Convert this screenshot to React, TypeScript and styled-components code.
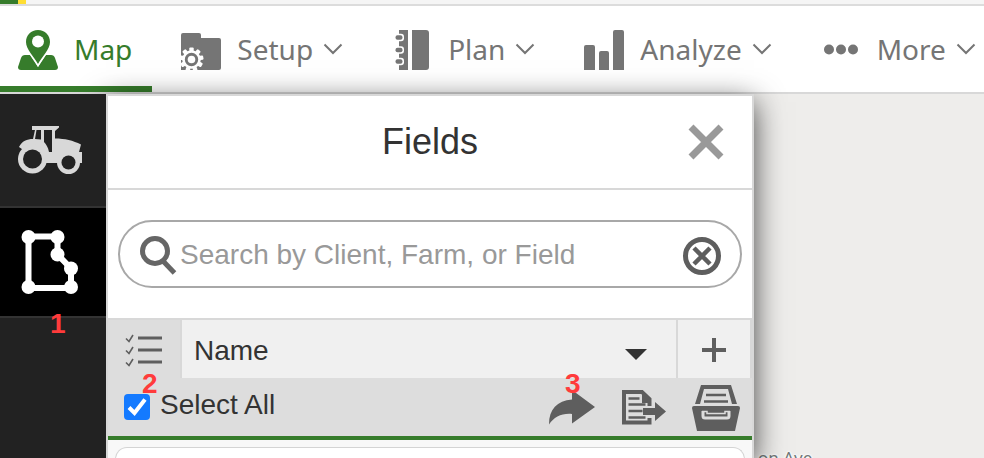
import React from "react";
import styled, { createGlobalStyle } from "styled-components";

const green = "#367c2b";
const navGrey = "#757575";
const line = "#d8d8d8";
const iconGrey = "#5e5e5e";

const GlobalStyle = createGlobalStyle`
  *, *::before, *::after { box-sizing: border-box; }
  body { margin: 0; font-family: "Liberation Sans", Arial, sans-serif; color: #333; }
  button, input, select { font: inherit; color: inherit; }
`;

const Page = styled.div`
  display: flex;
  flex-direction: column;
  height: 100vh;
  overflow: hidden;
  background: #eeedeb;
`;

const BrandStrip = styled.div`
  flex: none;
  height: 6px;
  border-bottom: 2px solid #dcdcdc;
  background: linear-gradient(to right, ${green} 18px, #ffde33 18px, #ffde33 26px, #f5f5f5 26px);
`;

const Nav = styled.nav`
  flex: none;
  display: flex;
  height: 88px;
  border-bottom: 2px solid ${line};
  background: #fff;
  overflow: hidden;
`;

const NavItem = styled.a<{ $active?: boolean }>`
  flex: none;
  display: flex;
  align-items: center;
  gap: 16px;
  padding: ${(p) => (p.$active ? "6px 20px 0 18px" : "6px 20px 6px 29px")};
  border-bottom: ${(p) => (p.$active ? `6px solid ${green}` : "none")};
  color: ${(p) => (p.$active ? green : navGrey)};
  font: 28px/40px "Noto Sans", sans-serif;
  text-decoration: none;
  white-space: nowrap;
`;

const NavIcon = styled.svg`
  flex: none;
  width: 40px;
  height: 42px;
  padding-top: 2px;
  fill: currentColor;
`;

const NavLabel = styled.span`
  display: flex;
  align-items: center;
  gap: 10px;
`;

const Chevron = () => (
  <svg width="20" height="12" viewBox="0 0 20 12" fill="none" stroke="currentColor" strokeWidth="2">
    <path d="M1.5 1.5 10 10 18.5 1.5" />
  </svg>
);

const Main = styled.main`
  isolation: isolate;
  flex: 1;
  min-height: 0;
  display: flex;
`;

const Sidebar = styled.aside`
  position: relative;
  z-index: 2;
  flex: none;
  width: 106px;
  background: #222;
`;

const SideButton = styled.button<{ $active?: boolean }>`
  display: flex;
  align-items: center;
  justify-content: center;
  width: 100%;
  height: ${(p) => (p.$active ? 110 : 114)}px;
  padding: 0 6px 0 0;
  border: 0;
  border-bottom: 2px solid #333;
  background: ${(p) => (p.$active ? "#000" : "#222")};
  color: ${(p) => (p.$active ? "#fff" : "#d8d8d8")};
`;

const Marker = styled.span<{ $left: number; $top: number }>`
  position: absolute;
  z-index: 2;
  left: ${(p) => p.$left}px;
  top: ${(p) => p.$top}px;
  color: #ff3b3b;
  font-size: 28px;
  line-height: 28px;
  font-weight: bold;
  pointer-events: none;
`;

const Panel = styled.section`
  position: relative;
  z-index: 1;
  flex: 0 1 648px;
  display: flex;
  flex-direction: column;
  border: 2px solid ${line};
  border-bottom: 0;
  background: #f8f8f8;
  box-shadow: 0 8px 28px rgba(0, 0, 0, 0.72);
`;

const PanelHeader = styled.header`
  flex: none;
  display: grid;
  grid-template-columns: 92px 1fr 92px;
  align-items: center;
  height: 94px;
  border-bottom: 2px solid ${line};
  background: #fff;
`;

const Title = styled.h1`
  grid-column: 2;
  margin: 0;
  font-size: 36px;
  line-height: 40px;
  font-weight: normal;
  text-align: center;
`;

const IconButton = styled.button`
  display: flex;
  align-items: center;
  justify-content: center;
  flex: none;
  padding: 0;
  border: 0;
  background: none;
  color: ${iconGrey};
`;

const CloseButton = styled(IconButton)`
  color: #999;
`;

const SearchArea = styled.div`
  flex: none;
  padding: 30px 10px;
  background: #fff;
`;

const SearchBox = styled.label`
  display: flex;
  align-items: center;
  height: 68px;
  padding: 2px 18px 0 20px;
  border: 2px solid #a8a8a8;
  border-radius: 34px;
`;

const SearchInput = styled.input`
  flex: 1;
  min-width: 0;
  padding: 0 0 0 2px;
  border: 0;
  outline: 0;
  background: none;
  font-size: 28px;
  line-height: 32px;
  &::placeholder { color: #999; opacity: 1; }
`;

const SortRow = styled.div`
  flex: none;
  display: flex;
  height: 60px;
  border-top: 2px solid ${line};
  border-right: 2px solid ${line};
  background: #f0f0f0;
`;

const ListButton = styled(IconButton)`
  width: 74px;
  padding-top: 2px;
  border-right: 2px solid ${line};
  background: #ddd;
`;

const AddButton = styled(IconButton)`
  width: 74px;
  padding-top: 2px;
  border-left: 2px solid ${line};
`;

const SortField = styled.label`
  flex: 1;
  display: grid;
  align-items: center;
  & > * { grid-area: 1 / 1; }
  & > svg { justify-self: end; margin: 12px 29px 0 0; pointer-events: none; }
`;

const SortSelect = styled.select`
  width: 100%;
  height: 100%;
  padding: 2px 60px 0 12px;
  border: 0;
  appearance: none;
  background: none;
  color: #333;
  font-size: 28px;
`;

const ActionRow = styled.div`
  flex: none;
  display: flex;
  justify-content: space-between;
  height: 62px;
  padding: 0 11px 0 16px;
  border-bottom: 4px solid ${green};
  background: #ddd;
`;

const SelectAll = styled.label`
  display: flex;
  align-items: center;
  gap: 10px;
  padding-bottom: 4px;
  font-size: 28px;
  line-height: 32px;
`;

const CheckBox = styled.input`
  width: 26px;
  height: 26px;
  margin: 4px 0 0;
  appearance: none;
  border-radius: 4px;
  background: #fff;
  &:checked { background: #147aff; }
`;

const CheckWrap = styled.span`
  display: grid;
  & > * { grid-area: 1 / 1; }
  & > svg { margin-top: 4px; pointer-events: none; }
`;

const Actions = styled.div`
  display: flex;
  align-items: center;
  gap: 24px;
  padding-top: 2px;
`;

const Card = styled.div`
  flex: 1 0 40px;
  margin: 7px 7px 0;
  border: 1px solid #d4d4d4;
  border-bottom: 0;
  border-radius: 12px 12px 0 0;
  background: #fff;
`;

const MapArea = styled.div`
  flex: 1;
  position: relative;
  min-width: 0;
  overflow: hidden;
`;

const Street = styled.span`
  position: absolute;
  left: 4px;
  top: 354px;
  color: #707777;
  font: 17px/20px "Noto Sans", sans-serif;
  text-shadow: 0 0 3px #fff, 0 0 3px #fff, 0 0 2px #fff;
`;

const teeth = [0, 40, 80, 120, 160, 200, 240, 280, 320];

export default function App() {
  return (
    <Page>
      <GlobalStyle />
      <BrandStrip />
      <Nav>
        <NavItem href="#map" $active>
          <NavIcon viewBox="0 0 40 40">
            <path d="M7 25h5L20 37l8-12h5q3 0 4 3l3 9q0 3-3 3H3q-3 0-3-3l3-9q1-3 4-3z" />
            <path
              d="M20 0C13 0 8 5 8 12c0 7 8 15 12 22 4-7 12-15 12-22C32 5 27 0 20 0z"
              stroke="#fff"
              strokeWidth="3"
              paintOrder="stroke"
            />
            <circle cx="20" cy="11.5" r="6" fill="#fff" />
          </NavIcon>
          <NavLabel>Map</NavLabel>
        </NavItem>
        <NavItem href="#setup">
          <NavIcon viewBox="0 0 40 40">
            <path d="M0 5q0-2 2-2h16q2 0 2 2v3h18q2 0 2 2v28q0 2-2 2H0z" />
            <g transform="translate(10.5 29.5)">
              <circle r="8" fill="none" stroke="#fff" strokeWidth="2.6" />
              {teeth.map((a) => (
                <rect key={a} x="-2.2" y="-12" width="4.4" height="4" rx="1" fill="#fff" transform={`rotate(${a})`} />
              ))}
              <circle r="3.800" fill="#fff" />
            </g>
          </NavIcon>
          <NavLabel>Setup <Chevron /></NavLabel>
        </NavItem>
        <NavItem href="#plan">
          <NavIcon viewBox="0 0 40 40">
            <path d="M7 0h9v40H7zM20 0h14q3 0 3 3v34q0 3-3 3H20z" />
            {[7.5, 20, 31.5].map((y) => (
              <g key={y}>
                <rect x="3.5" y={y - 3.8} width="8.5" height="7.6" rx="3" fill="#fff" />
                <rect x="3.5" y={y - 2.3} width="7" height="4.6" rx="2" />
              </g>
            ))}
          </NavIcon>
          <NavLabel>Plan <Chevron /></NavLabel>
        </NavItem>
        <NavItem href="#analyze">
          <NavIcon viewBox="0 0 40 40">
            <path d="M0 17q0-2 2-2h7q2 0 2 2v23H0zM15 23q0-2 2-2h6q2 0 2 2v17H15zM29 2q0-2 2-2h7q2 0 2 2v38H29z" />
          </NavIcon>
          <NavLabel>Analyze <Chevron /></NavLabel>
        </NavItem>
        <NavItem href="#more">
          <NavIcon viewBox="0 0 40 40">
            <circle cx="8" cy="19.5" r="5" />
            <circle cx="20" cy="19.5" r="5" />
            <circle cx="32" cy="19.5" r="5" />
          </NavIcon>
          <NavLabel>More <Chevron /></NavLabel>
        </NavItem>
      </Nav>
      <Main>
        <Sidebar>
          <SideButton aria-label="Equipment">
            <svg width="64" height="48" viewBox="0 0 64 48" fill="currentColor">
              <path d="M14 0h27v1.500L37 5v7.500c10 0 18 2 26 6L61 26h3v11H28L14 30 1 21C4 15 9 13 15 13l2-9h-3z" />
              <path d="M18.500 4h4.500v9.500l-6-.5zM26 4h8v22h-3c-1-5-3-8-5-10z" fill="#222" />
              <circle cx="14.500" cy="33" r="14.500" />
              <circle cx="50.500" cy="36.500" r="11.500" />
              <circle cx="14.500" cy="33" r="9.500" fill="#222" />
              <circle cx="50.500" cy="36.500" r="7" fill="#222" />
            </svg>
          </SideButton>
          <SideButton $active aria-label="Fields">
            <svg width="58" height="64" viewBox="0 0 58 64" fill="currentColor">
              <path d="M7.500 6.500h29v18L50 38.500V58H7.500z" fill="none" stroke="currentColor" strokeWidth="6" />
              <circle cx="7.500" cy="7" r="7" />
              <circle cx="36.500" cy="7" r="7" />
              <circle cx="36.500" cy="24.500" r="7" />
              <circle cx="50" cy="38.500" r="7" />
              <circle cx="50" cy="57" r="7" />
              <circle cx="7.500" cy="57" r="7" />
            </svg>
          </SideButton>
          <Marker $left={50} $top={216}>1</Marker>
        </Sidebar>
        <Panel>
          <PanelHeader>
            <Title>Fields</Title>
            <CloseButton aria-label="Close">
              <svg width="36" height="36" viewBox="0 0 36 36" stroke="currentColor" strokeWidth="7">
                <path d="M3 3l30 30M33 3L3 33" />
              </svg>
            </CloseButton>
          </PanelHeader>
          <SearchArea>
            <SearchBox>
              <svg width="38" height="40" viewBox="0 0 38 40" fill="none" stroke="#666">
                <circle cx="15" cy="16" r="12.500" strokeWidth="5" />
                <path d="M23 26l11.500 12" strokeWidth="5" />
              </svg>
              <SearchInput type="text" aria-label="Search fields" placeholder="Search by Client, Farm, or Field" />
              <IconButton type="button" aria-label="Clear search">
                <svg width="40" height="40" viewBox="0 0 40 40" fill="none" stroke="#5e5e5e">
                  <circle cx="20" cy="21" r="16.500" strokeWidth="5" />
                  <path d="M12 13l16 16M28 13L12 29" strokeWidth="4.500" />
                </svg>
              </IconButton>
            </SearchBox>
          </SearchArea>
          <SortRow>
            <ListButton aria-label="Toggle selection">
              <svg width="38" height="34" viewBox="0 0 38 34" fill="none" stroke="currentColor">
                <path d="M13 5h24M13 17h24M13 29h24" strokeWidth="3" />
                <path d="M1 5.500l3 3L8 2M1 17.500l3 3L8 14M1 29.500l3 3L8 26" strokeWidth="1.600" />
              </svg>
            </ListButton>
            <SortField>
              <SortSelect aria-label="Sort by" defaultValue="Name">
                <option>Name</option>
              </SortSelect>
              <svg width="22" height="12" viewBox="0 0 22 12" fill="#333">
                <path d="M0 0h22L11 11z" />
              </svg>
            </SortField>
            <AddButton aria-label="Add">
              <svg width="24" height="24" viewBox="0 0 24 24" stroke="currentColor" strokeWidth="4">
                <path d="M0 12h24M12 0v24" />
              </svg>
            </AddButton>
          </SortRow>
          <ActionRow>
            <SelectAll>
              <CheckWrap>
                <CheckBox type="checkbox" defaultChecked />
                <svg width="26" height="26" viewBox="0 0 26 26" fill="none" stroke="#fff" strokeWidth="4">
                  <path d="M5 13.500l5.500 5.500L21 5.500" />
                </svg>
              </CheckWrap>
              Select All
            </SelectAll>
            <Actions>
              <IconButton aria-label="Share">
                <svg width="48" height="46" viewBox="0 0 48 46" fill="currentColor">
                  <path d="M23 5L46 22 23 38.500V29C13 28 5 32 0 39.500 0 24 8 16 23 14.500z" />
                </svg>
              </IconButton>
              <IconButton aria-label="Export">
                <svg width="46" height="46" viewBox="0 0 46 46" fill="none" stroke="currentColor">
                  <path d="M28.500 33v4.500H3V7h18l7.500 7v7" strokeWidth="4" />
                  <path d="M21 5l9 9v4h-9z" fill="currentColor" stroke="none" />
                  <path d="M7.500 13.500h11M7.500 19.500h17M7.500 26h14M7.500 32.500h17" strokeWidth="2.400" />
                  <path d="M22 23h12v-6l11 9.500-11 9.500v-6H22z" fill="currentColor" stroke="none" />
                </svg>
              </IconButton>
              <IconButton aria-label="Archive">
                <svg width="50" height="46" viewBox="0 0 50 46" fill="currentColor">
                  <path d="M10 0h30l6 19h-5l-4-15H13L9 19H4z" />
                  <path d="M15 10h20M13 16.500h24" stroke="currentColor" strokeWidth="2.600" />
                  <path d="M3 21h44q2 0 2 2l-5 23H6L1 23q0-2 2-2z" />
                  <path d="M12 26v5q0 2 2 2h22q2 0 2-2v-5" stroke="#ddd" strokeWidth="3" fill="none" />
                  <path d="M11 26.500h5v2h18v-2h5" stroke="#ddd" strokeWidth="1.500" fill="none" />
                </svg>
              </IconButton>
            </Actions>
          </ActionRow>
          <Card />
          <Marker $left={34} $top={274}>2</Marker>
          <Marker $left={457} $top={274}>3</Marker>
        </Panel>
        <MapArea>
          <Street>on Ave</Street>
        </MapArea>
      </Main>
    </Page>
  );
}
